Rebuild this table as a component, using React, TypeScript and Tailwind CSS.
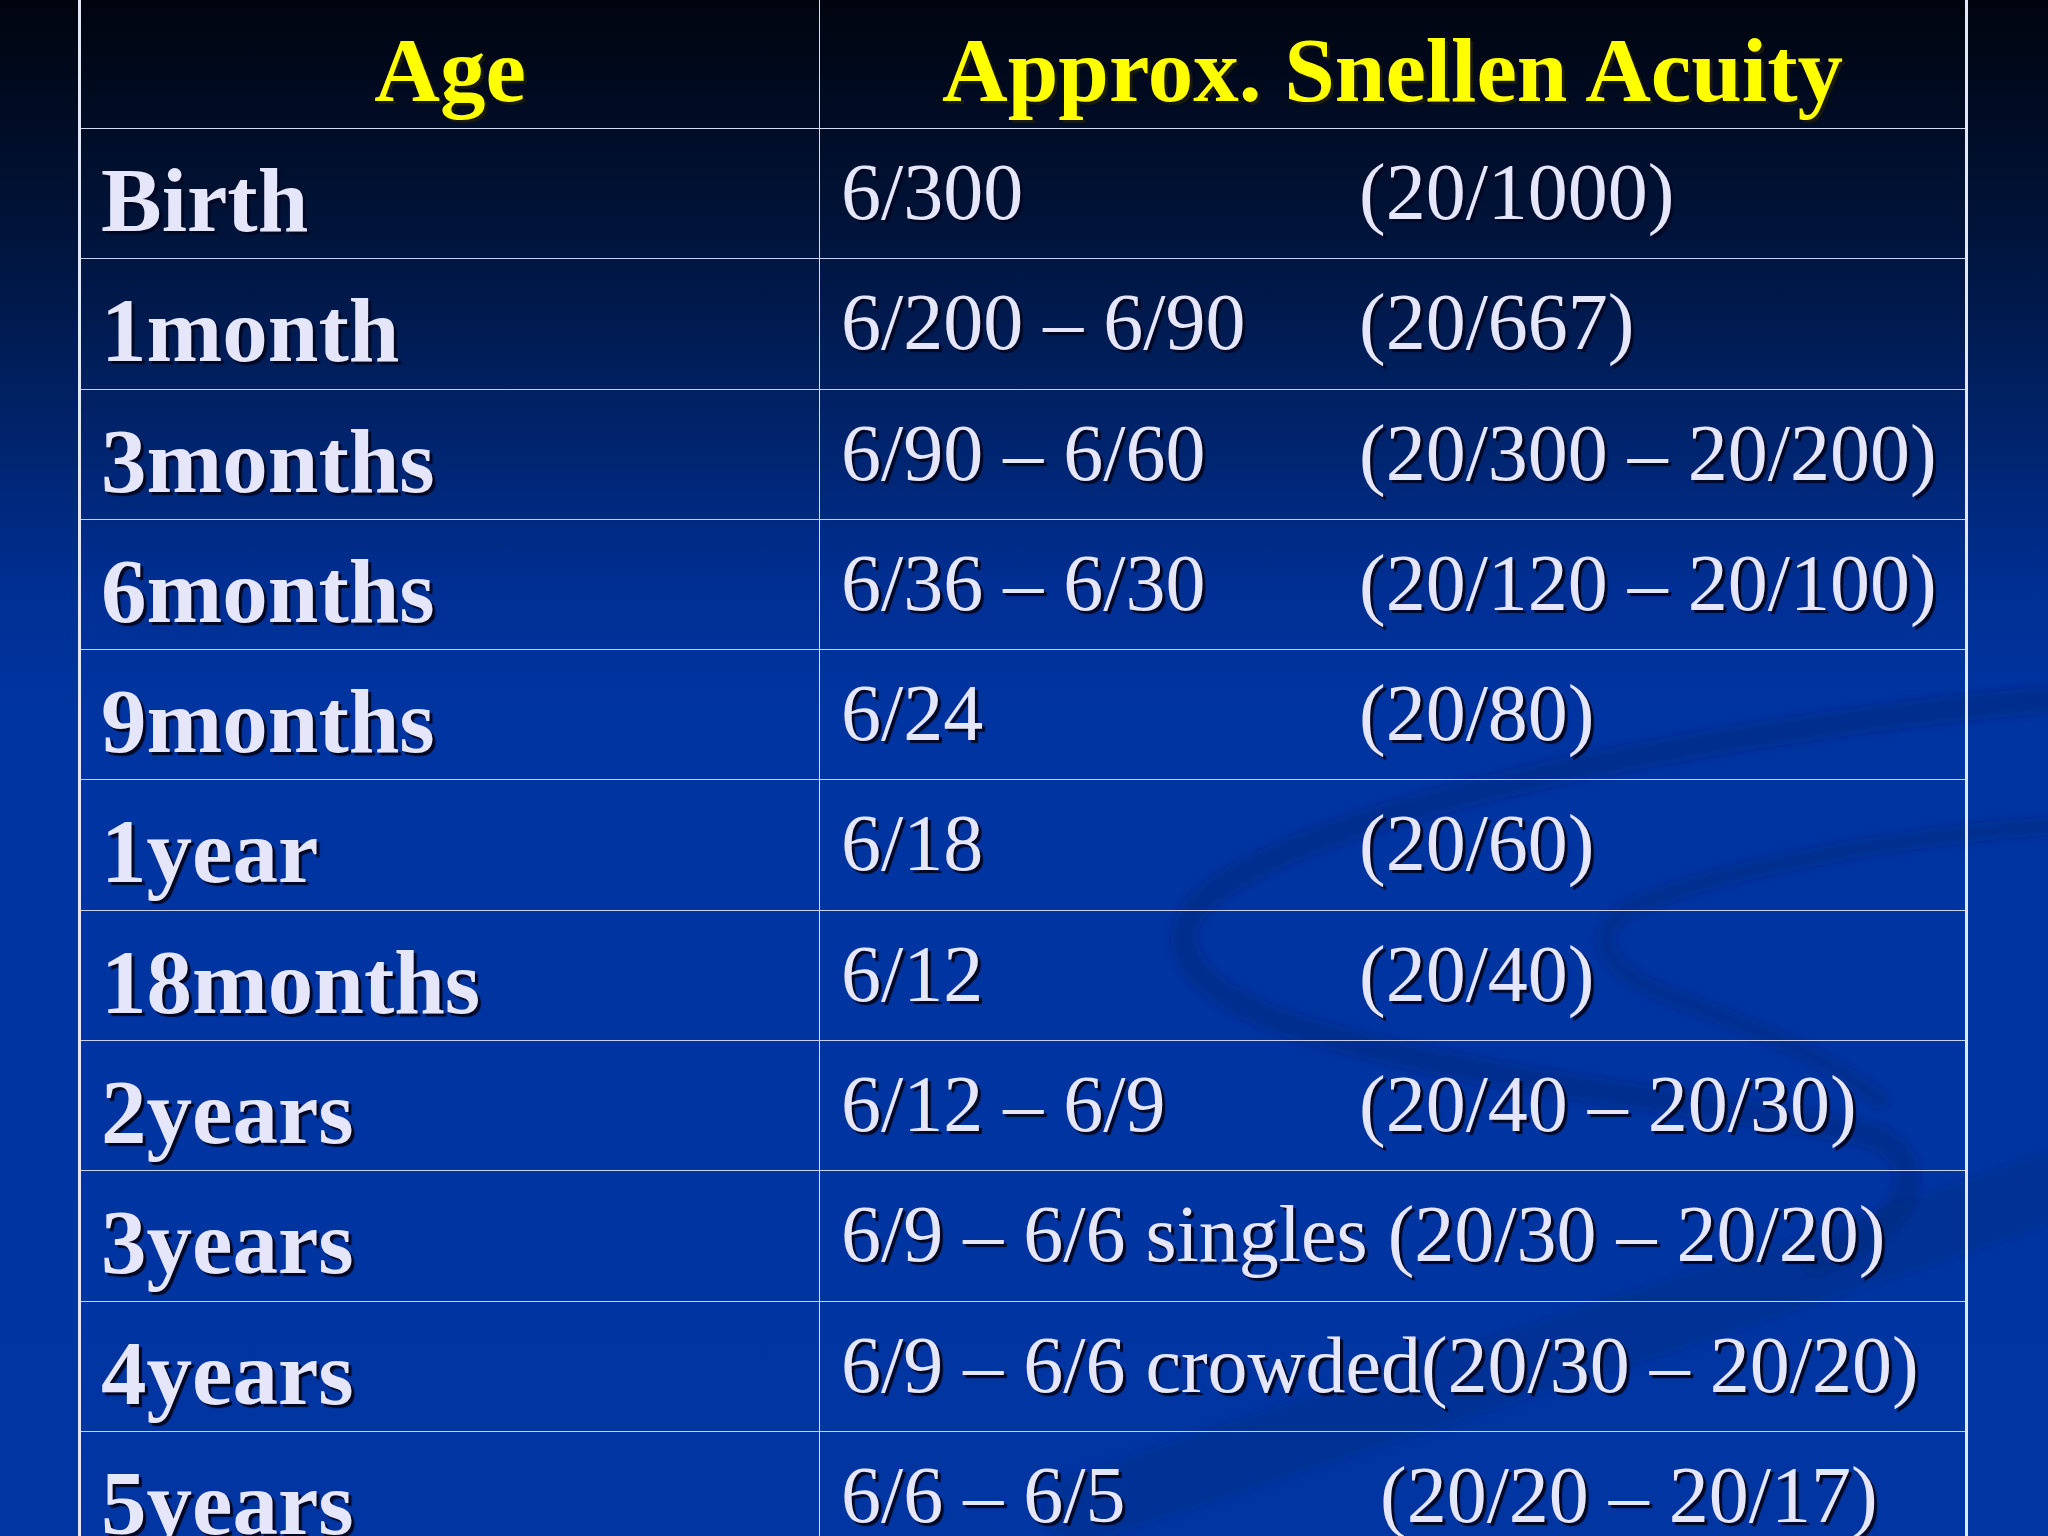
const rows: { age: string; left: string; right?: string; wide?: boolean }[] = [
  { age: "Birth", left: "6/300", right: "(20/1000)" },
  { age: "1month", left: "6/200 – 6/90", right: "(20/667)" },
  { age: "3months", left: "6/90 – 6/60", right: "(20/300 – 20/200)" },
  { age: "6months", left: "6/36 – 6/30", right: "(20/120 – 20/100)" },
  { age: "9months", left: "6/24", right: "(20/80)" },
  { age: "1year", left: "6/18", right: "(20/60)" },
  { age: "18months", left: "6/12", right: "(20/40)" },
  { age: "2years", left: "6/12 – 6/9", right: "(20/40 – 20/30)" },
  { age: "3years", left: "6/9 – 6/6 singles (20/30 – 20/20)" },
  { age: "4years", left: "6/9 – 6/6 crowded(20/30 – 20/20)" },
  { age: "5years", left: "6/6 – 6/5", right: "(20/20 – 20/17)", wide: true },
];

function Swoosh() {
  // faint background swirl of the slide template
  return (
    <svg
      className="absolute inset-0 pointer-events-none"
      width="2048"
      height="1536"
      viewBox="0 0 2048 1536"
      fill="none"
    >
      <defs>
        <filter id="soft" x="-10%" y="-10%" width="120%" height="120%">
          <feGaussianBlur stdDeviation="5" />
        </filter>
      </defs>
      <g filter="url(#soft)" stroke="#001e66" strokeLinecap="round">
        <path
          d="M2048 700 C1800 720 1360 790 1215 890 C1160 930 1175 985 1290 1025 C1480 1085 1740 1105 1870 1135 C1935 1160 1915 1225 1815 1262"
          strokeOpacity="0.3"
          strokeWidth="26"
        />
        <path
          d="M2048 826 C1880 838 1700 875 1625 910 C1585 940 1610 975 1680 1000 C1760 1030 1830 1060 1880 1100"
          strokeOpacity="0.28"
          strokeWidth="18"
        />
        <path
          d="M1080 1510 C1400 1400 1760 1290 2048 1188"
          strokeOpacity="0.22"
          strokeWidth="70"
        />
      </g>
    </svg>
  );
}

export default function App() {
  const bold = "font-['Liberation_Serif','Times_New_Roman',serif] font-bold text-[91px] leading-none";
  const reg = "font-['Liberation_Serif','Times_New_Roman',serif] text-[80px] leading-none text-[#e6e6fa] [text-shadow:3px_3px_1px_#020824] whitespace-pre";

  return (
    <div className="relative w-[2048px] h-[1536px] overflow-hidden bg-[linear-gradient(to_bottom,#00040e_0%,#00143a_15%,#00236a_28%,#002f92_38%,#0034a0_46%,#0035a2_100%)]">
      <Swoosh />
      <div className="relative ml-[78px] w-[1890px] border-x-[3px] border-[#e4e8f6]">
        <div className="grid grid-cols-[739px_1fr] h-[129px] border-b border-[#d4dcf4]">
          <div className={`${bold} text-[#ffff00] [text-shadow:3px_3px_1px_#1a1a10] text-center pt-[25px] border-r border-[#d4dcf4]`}>
            Age
          </div>
          <div className={`${bold} text-[#ffff00] [text-shadow:3px_3px_1px_#1a1a10] text-center pt-[25px]`}>
            Approx. Snellen Acuity
          </div>
        </div>
        {rows.map((r) => (
          <div key={r.age} className="grid grid-cols-[739px_1fr] h-[130.3px] border-b border-[#c8d2f0]">
            <div className={`${bold} text-[#e6e6fa] [text-shadow:3px_3px_1px_#020824] pl-[20px] pt-[26px] border-r border-[#d4dcf4]`}>
              {r.age}
            </div>
            <div className={`${reg} flex pl-[21px] pt-[23px]`}>
              {r.right ? (
                <>
                  <span className={r.wide ? "w-[539px]" : "w-[518px]"}>{r.left}</span>
                  <span>{r.right}</span>
                </>
              ) : (
                <span>{r.left}</span>
              )}
            </div>
          </div>
        ))}
      </div>
    </div>
  );
}
